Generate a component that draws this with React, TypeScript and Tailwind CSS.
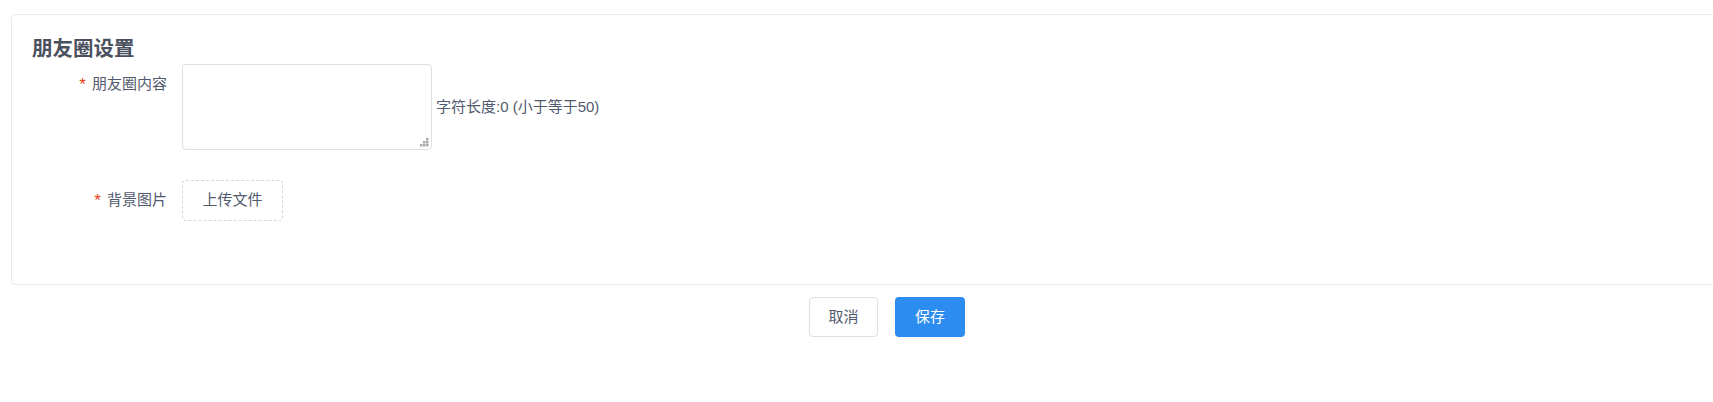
import React, { useState } from 'react';

const font = { fontFamily: '"Liberation Sans", "Noto Sans CJK SC", sans-serif' };

const ResizeGrip: React.FC = () => (
  <svg className="pointer-events-none absolute right-[3px] bottom-[3px]" width="9" height="9" viewBox="0 0 9 9">
    {[
      [6, 0],
      [3, 3],
      [6, 3],
      [0, 6],
      [3, 6],
      [6, 6],
    ].map(([x, y]) => (
      <rect key={`${x}-${y}`} x={x} y={y} width="2.5" height="2.5" fill="#a8a8a8" />
    ))}
  </svg>
);

const FormLabel: React.FC<{ text: string }> = ({ text }) => (
  <div className="flex w-[150px] shrink-0 items-center justify-end pr-[15px] h-[40px] text-[15px] text-[#515a6e]">
    <span className="mr-[6px] text-[17px] leading-none text-[#ed4014]">*</span>
    {text}
  </div>
);

export default function App() {
  const [content, setContent] = useState('');

  return (
    <div className="w-full overflow-hidden bg-white" style={font}>
      <div className="w-[1774px] pt-[14px] pb-[66px]">
        {/* 设置卡片 */}
        <div className="mx-[11px] rounded-[4px] border border-[#e6e8eb] bg-white pl-[20px] pt-[23px] pb-[63px]">
          <h2 className="text-[20.5px] font-bold leading-[21px] text-[#4b505e]">朋友圈设置</h2>

          <div className="mt-[5px] flex">
            <FormLabel text="朋友圈内容" />
            <div className="flex items-center">
              <div className="relative">
                <textarea
                  value={content}
                  onChange={(e) => setContent(e.target.value)}
                  className="block h-[86px] w-[250px] resize-none rounded-[4px] border border-[#dcdfe6] px-[12px] py-[6px] text-[15px] text-[#515a6e] outline-none"
                />
                <ResizeGrip />
              </div>
              <span className="ml-[4px] text-[15px] text-[#515a6e]">
                字符长度:{content.length} (小于等于50)
              </span>
            </div>
          </div>

          <div className="mt-[30px] flex">
            <FormLabel text="背景图片" />
            <button className="h-[41px] w-[101px] rounded-[4px] border border-dashed border-[#d3d6dc] text-[15px] text-[#515a6e]">
              上传文件
            </button>
          </div>
        </div>

        {/* 操作按钮 */}
        <div className="mt-[12px] flex justify-center gap-[17px]">
          <button className="h-[40px] w-[69px] rounded-[4px] border border-[#dcdfe6] bg-white text-[15px] text-[#515a6e]">
            取消
          </button>
          <button className="h-[40px] w-[70px] rounded-[4px] bg-[#2d8cf0] text-[15px] text-white">
            保存
          </button>
        </div>
      </div>
    </div>
  );
}
